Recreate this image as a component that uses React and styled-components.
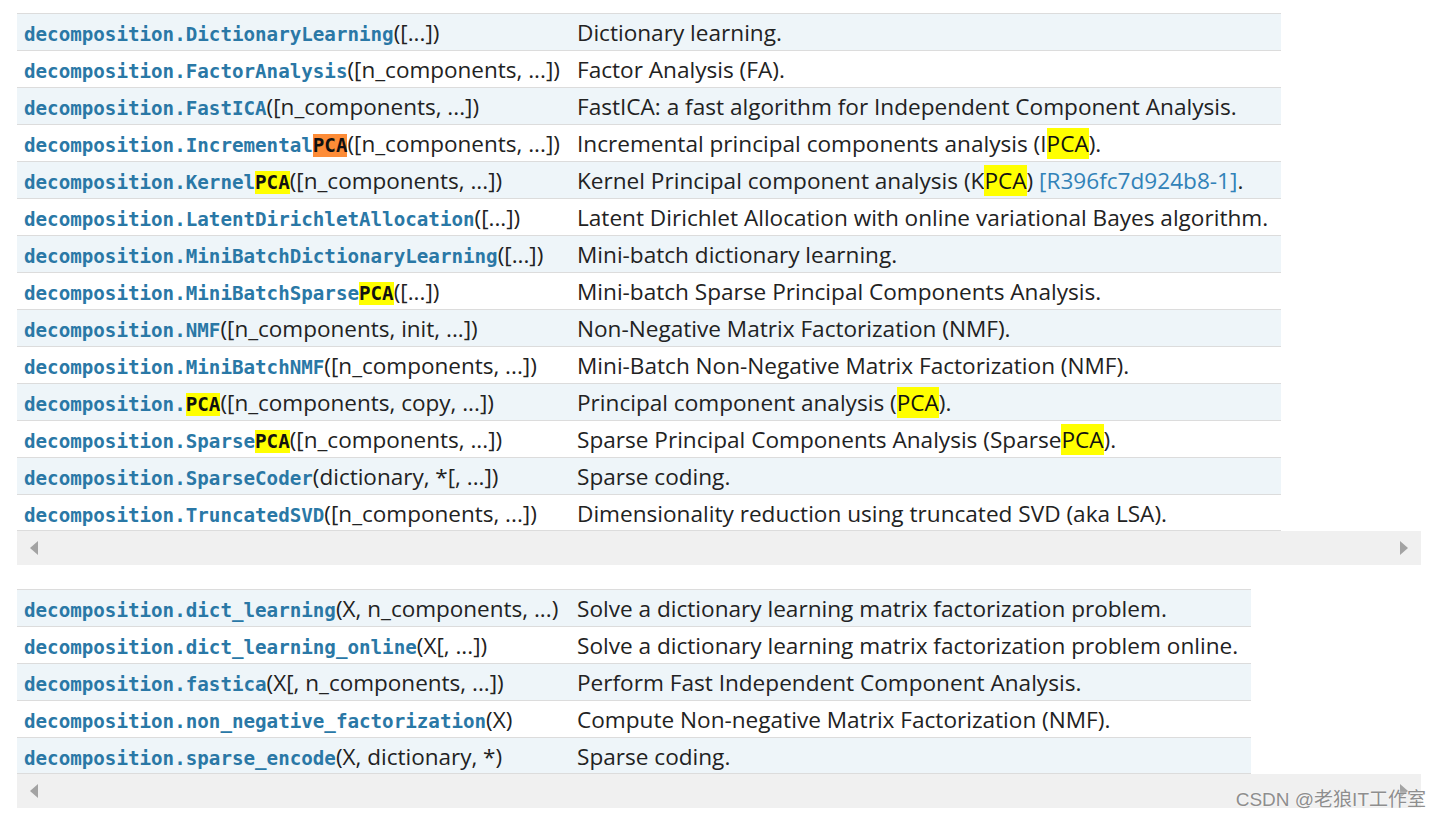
import React from "react";
import styled, { createGlobalStyle } from "styled-components";

const Global = createGlobalStyle`
  html, body { margin: 0; padding: 0; background: #fff; }
  body { font-family: "Open Sans", "Noto Sans", sans-serif; color: #222; }
`;

const Page = styled.div`
  position: relative;
  width: 1440px;
  height: 816px;
  box-sizing: border-box;
  padding: 13px 0 0 17px;
  display: flex;
  flex-direction: column;
  gap: 24px;
  overflow: hidden;
`;

const Section = styled.div`
  width: 1404px;
  display: flex;
  flex-direction: column;
`;

const Table = styled.div`
  width: ${(p) => p.$width}px;
  display: flex;
  flex-direction: column;
`;

const Row = styled.div`
  display: flex;
  align-items: center;
  height: 37px;
  box-sizing: border-box;
  border-top: 1px solid #dcdcdc;
  border-bottom: ${(p) => (p.$last ? "1px solid #dcdcdc" : "none")};
  background: ${(p) => (p.$odd ? "#eef5f9" : "#ffffff")};
`;

const NameCell = styled.div`
  width: 553px;
  box-sizing: border-box;
  padding-left: 7px;
  white-space: nowrap;
  font-size: 22.5px;
  color: #222;
  padding-top: 1px;
`;

const DescCell = styled.div`
  flex: 1;
  padding-left: 7px;
  white-space: nowrap;
  font-size: 22.6px;
  color: #222;
  padding-top: 1px;
`;

const Code = styled.code`
  font-family: "DejaVu Sans Mono", "Liberation Mono", monospace;
  font-weight: bold;
  font-size: 19.2px;
  color: #2a78a6;
`;

const Mark = styled.span`
  background: ${(p) => (p.$orange ? "#fd8c37" : "#ffff00")};
  color: #111;
`;

const RefLink = styled.span`
  color: #3182b8;
`;

const Scrollbar = styled.div`
  height: 34px;
  background: #f0f0f0;
  display: flex;
  align-items: center;
  justify-content: space-between;
  padding: 0 13px;
`;

const Arrow = styled.span`
  width: 0;
  height: 0;
  border-top: 7px solid transparent;
  border-bottom: 7px solid transparent;
  ${(p) =>
    p.$dir === "left"
      ? "border-right: 8px solid #a3a3a3;"
      : "border-left: 8px solid #a3a3a3;"}
`;

const Watermark = styled.div`
  position: absolute;
  right: 14px;
  top: 784px;
  font-family: "Liberation Sans", "Noto Sans CJK SC", sans-serif;
  font-size: 19px;
  color: #8e8e8e;
  text-shadow: 0 0 2px #fff;
  white-space: nowrap;
`;

const hl = (text, orange) =>
  text.split(/(PCA)/).map((s, i) =>
    s === "PCA" ? (
      <Mark key={i} $orange={orange}>
        PCA
      </Mark>
    ) : (
      s
    )
  );

const table1 = [
  ["DictionaryLearning", "([...])", "Dictionary learning."],
  ["FactorAnalysis", "([n_components, ...])", "Factor Analysis (FA)."],
  ["FastICA", "([n_components, ...])", "FastICA: a fast algorithm for Independent Component Analysis."],
  ["IncrementalPCA", "([n_components, ...])", "Incremental principal components analysis (IPCA).", true],
  ["KernelPCA", "([n_components, ...])", "Kernel Principal component analysis (KPCA)", false, "[R396fc7d924b8-1]"],
  ["LatentDirichletAllocation", "([...])", "Latent Dirichlet Allocation with online variational Bayes algorithm."],
  ["MiniBatchDictionaryLearning", "([...])", "Mini-batch dictionary learning."],
  ["MiniBatchSparsePCA", "([...])", "Mini-batch Sparse Principal Components Analysis."],
  ["NMF", "([n_components, init, ...])", "Non-Negative Matrix Factorization (NMF)."],
  ["MiniBatchNMF", "([n_components, ...])", "Mini-Batch Non-Negative Matrix Factorization (NMF)."],
  ["PCA", "([n_components, copy, ...])", "Principal component analysis (PCA)."],
  ["SparsePCA", "([n_components, ...])", "Sparse Principal Components Analysis (SparsePCA)."],
  ["SparseCoder", "(dictionary, *[, ...])", "Sparse coding."],
  ["TruncatedSVD", "([n_components, ...])", "Dimensionality reduction using truncated SVD (aka LSA)."],
];

const table2 = [
  ["dict_learning", "(X, n_components, ...)", "Solve a dictionary learning matrix factorization problem."],
  ["dict_learning_online", "(X[, ...])", "Solve a dictionary learning matrix factorization problem online."],
  ["fastica", "(X[, n_components, ...])", "Perform Fast Independent Component Analysis."],
  ["non_negative_factorization", "(X)", "Compute Non-negative Matrix Factorization (NMF)."],
  ["sparse_encode", "(X, dictionary, *)", "Sparse coding."],
];

function ApiTable({ rows, width }) {
  return (
    <Section>
      <Table $width={width}>
        {rows.map(([name, sig, desc, orange, link], i) => (
          <Row key={name} $odd={i % 2 === 0} $last={i === rows.length - 1}>
            <NameCell>
              <Code>
                decomposition.{hl(name, orange)}
              </Code>
              {sig}
            </NameCell>
            <DescCell>
              {hl(desc, false)}
              {link && (
                <>
                  {" "}
                  <RefLink>{link}</RefLink>.
                </>
              )}
            </DescCell>
          </Row>
        ))}
      </Table>
      <Scrollbar>
        <Arrow $dir="left" />
        <Arrow $dir="right" />
      </Scrollbar>
    </Section>
  );
}

export default function App() {
  return (
    <>
      <Global />
      <Page>
        <ApiTable rows={table1} width={1264} />
        <ApiTable rows={table2} width={1234} />
        <Watermark>CSDN @老狼IT工作室</Watermark>
      </Page>
    </>
  );
}
